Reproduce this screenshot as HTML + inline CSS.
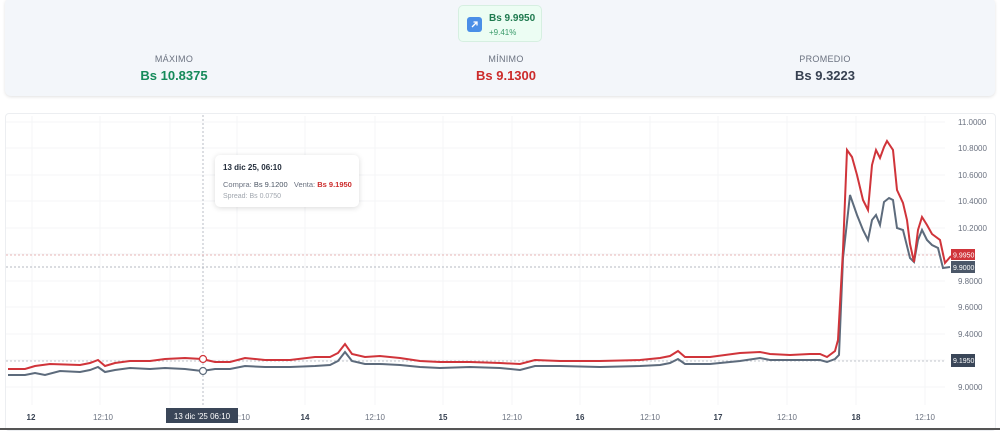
<!DOCTYPE html><html><head><meta charset="utf-8"><style>
body{margin:0;width:1000px;height:431px;background:#fff;font-family:"Liberation Sans",sans-serif;overflow:hidden;position:relative}
.hdr{position:absolute;left:5px;top:-2px;width:990px;height:98px;background:#f3f6fa;border-radius:6px;box-shadow:0 1px 3px rgba(0,0,0,.12)}
.badge{position:absolute;left:458px;top:5px;width:84px;height:37px;background:#ecfdf3;border:1px solid #d6efe1;border-radius:5px;box-sizing:border-box}
.ico{position:absolute;left:8px;top:11px;width:15px;height:15px;background:#4a8fe7;border-radius:3px}
.stat{position:absolute;top:54px;width:200px;text-align:center}
.stat .l{font-size:9px;color:#6b7280;letter-spacing:.3px}
.stat .v{font-size:13px;font-weight:bold;margin-top:4px}
.card{position:absolute;left:5px;top:113px;width:989px;height:316px;border:1px solid #eceef1;border-radius:4px}
.tip{position:absolute;left:215px;top:155px;width:144px;height:52px;background:#fff;border-radius:5px;box-shadow:0 1px 6px rgba(0,0,0,.15);font-size:7.5px;white-space:nowrap}
</style></head><body>
<div class="hdr"></div>
<div class="badge"><div class="ico"><svg width="15" height="15"><path d="M5 10L10 5M6.5 5H10V8.5" stroke="#fff" stroke-width="1.3" fill="none"/></svg></div>
<div style="position:absolute;left:30px;top:7px;font-size:10px;font-weight:bold;color:#1f7a4f">Bs 9.9950</div>
<div style="position:absolute;left:30px;top:22px;font-size:8px;color:#3a9a6a">+9.41%</div></div>
<div class="stat" style="left:74px"><div class="l">MÁXIMO</div><div class="v" style="color:#158a5a">Bs 10.8375</div></div>
<div class="stat" style="left:406px"><div class="l">MÍNIMO</div><div class="v" style="color:#cc2b2b">Bs 9.1300</div></div>
<div class="stat" style="left:725px"><div class="l">PROMEDIO</div><div class="v" style="color:#374151">Bs 9.3223</div></div>
<div class="card"></div>
<svg style="position:absolute;left:0;top:0" width="1000" height="431">
<g stroke="#f4f5f7" stroke-width="1">
<path d="M32 116V405M100 116V405M170 116V405M237 116V405M305 116V405M375 116V405M443 116V405M512 116V405M580 116V405M650 116V405M718 116V405M787 116V405M856 116V405M925 116V405"/>
<path d="M6 122H945M6 148H945M6 175H945M6 201H945M6 228H945M6 254H945M6 281H945M6 307H945M6 334H945M6 360H945M6 387H945"/>
</g>
<line x1="203" y1="115" x2="203" y2="405" stroke="#9ca3af" stroke-width="0.7" stroke-dasharray="2,2"/>
<line x1="6" y1="255" x2="945" y2="255" stroke="#e3a0a0" stroke-width="0.8" stroke-dasharray="2,2"/>
<line x1="6" y1="267" x2="945" y2="267" stroke="#9ca3af" stroke-width="0.8" stroke-dasharray="2,2"/>
<line x1="6" y1="361" x2="945" y2="361" stroke="#b0b5bd" stroke-width="0.8" stroke-dasharray="2,2"/>
<polyline fill="none" stroke="#5d6b7c" stroke-width="2" points="8,375 25,375 35,373 45,375 60,371 80,372 90,370 98,367 105,372 115,370 130,368 150,369 165,368 185,369 202,371 215,369 230,369 245,366 265,367 290,367 315,366 330,365 338,361 345,352 352,361 365,364 380,364 400,365 420,367 440,368 470,367 500,368 520,370 535,366 560,366 600,367 640,366 660,365 670,363 678,359 685,364 710,364 740,361 760,358 770,360 790,360 810,360 820,360 827,362 835,359 839,355 843,258 850,195 857,215 863,230 868,240 872,220 876,215 880,225 884,202 889,198 893,200 897,228 903,230 910,258 914,262 918,240 922,230 927,240 932,245 938,248 943,268 950,267"/>
<polyline fill="none" stroke="#d0343a" stroke-width="2" points="8,369 25,369 35,366 50,364 80,365 90,363 98,360 105,366 115,363 130,361 150,361 165,359 185,358 202,359 215,362 230,362 245,358 265,360 290,360 315,357 330,357 338,353 345,344 352,354 365,357 380,356 400,358 420,361 440,362 470,362 500,363 520,364 535,360 560,361 600,361 640,360 660,358 670,356 678,351 685,357 710,357 740,353 760,352 770,354 790,355 810,354 820,354 827,357 835,351 838,340 843,250 847,150 852,157 857,175 863,200 868,210 872,165 876,150 880,158 884,147 887,141 893,150 897,190 903,203 907,220 910,244 914,262 918,230 922,217 927,225 932,234 940,240 945,263 951,256"/>
<circle cx="203" cy="359" r="3.5" fill="#fff" stroke="#d0343a" stroke-width="1.2"/>
<circle cx="203" cy="371" r="3.5" fill="#fff" stroke="#5d6b7c" stroke-width="1.2"/>
<g font-size="8" fill="#6b7280" font-family="Liberation Sans,sans-serif">
<text x="958" y="125">11.0000</text><text x="958" y="151">10.8000</text><text x="958" y="178">10.6000</text><text x="958" y="204">10.4000</text><text x="958" y="231">10.2000</text><text x="958" y="284">9.8000</text><text x="958" y="310">9.6000</text><text x="958" y="337">9.4000</text><text x="958" y="390">9.0000</text>
</g>
<g font-size="7" fill="#fff" font-family="Liberation Sans,sans-serif">
<rect x="951" y="249" width="24" height="11" fill="#d0343a"/><text x="953" y="257.5">9.9950</text>
<rect x="951" y="261" width="24" height="12" fill="#4b5768"/><text x="953" y="270">9.9000</text>
<rect x="951" y="354" width="24" height="13" fill="#3a4658"/><text x="953" y="363">9.1950</text>
</g>
<g font-size="8" fill="#6b7280" font-family="Liberation Sans,sans-serif" text-anchor="middle">
<text x="31" y="420" font-weight="bold" fill="#374151">12</text><text x="103" y="420">12:10</text><text x="240" y="420">12:10</text>
<text x="305" y="420" font-weight="bold" fill="#374151">14</text><text x="375" y="420">12:10</text>
<text x="443" y="420" font-weight="bold" fill="#374151">15</text><text x="512" y="420">12:10</text>
<text x="580" y="420" font-weight="bold" fill="#374151">16</text><text x="650" y="420">12:10</text>
<text x="718" y="420" font-weight="bold" fill="#374151">17</text><text x="787" y="420">12:10</text>
<text x="856" y="420" font-weight="bold" fill="#374151">18</text><text x="925" y="420">12:10</text>
</g>
<rect x="166" y="408" width="72" height="15" fill="#3a4658"/><text x="202" y="419" font-size="8" fill="#fff" text-anchor="middle">13 dic '25  06:10</text>
<line x1="0" y1="429" x2="1000" y2="429" stroke="#555" stroke-width="2"/>
</svg>
<div class="tip">
<div style="position:absolute;left:8px;top:8px;font-weight:bold;color:#1f2937;font-size:8px">13 dic 25, 06:10</div>
<div style="position:absolute;left:8px;top:25px;color:#6b7280">Compra: <span style="color:#4b5563">Bs 9.1200</span>&nbsp;&nbsp; Venta: <span style="color:#cc2b2b;font-weight:bold">Bs 9.1950</span></div>
<div style="position:absolute;left:8px;top:38px;color:#a0a6ae;font-size:7px">Spread: Bs 0.0750</div>
</div>
</body></html>
